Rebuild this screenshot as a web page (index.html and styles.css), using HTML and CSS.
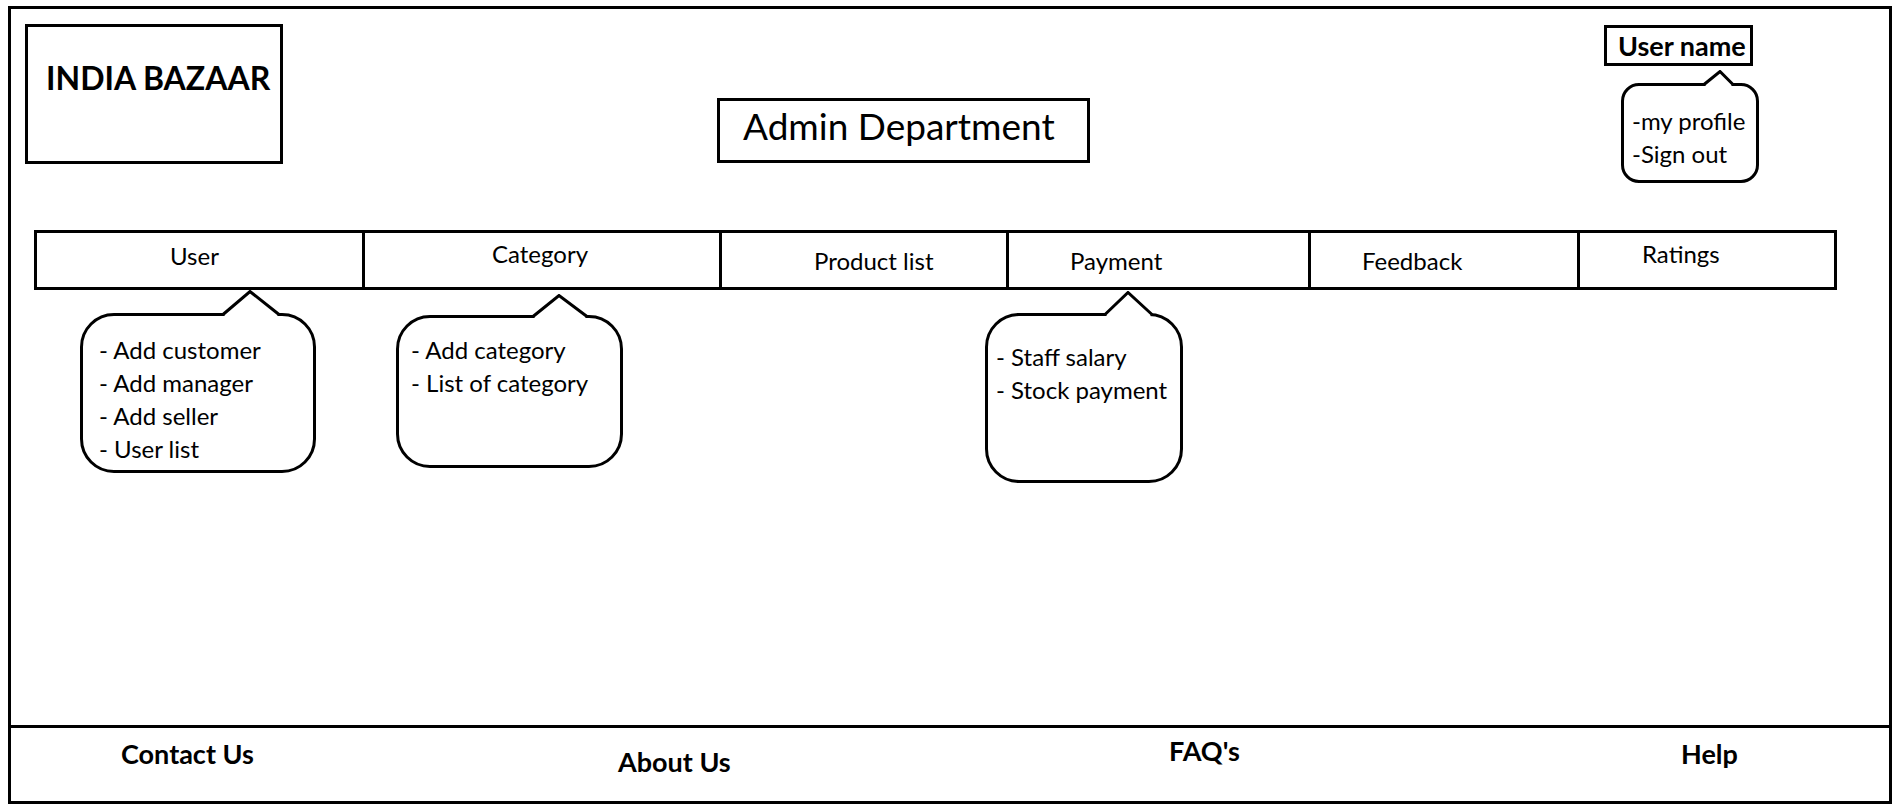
FILE: index.html
```html
<!DOCTYPE html>
<html>
<head>
    <link rel="stylesheet" href="styles.css">
</head>
<body>

<div class="frame">
    <div class="main">
        <div class="header">
            <div class="logo">INDIA BAZAAR</div>
            <div class="page-title">Admin Department</div>
            <div class="account">
                <div class="account-name">User name</div>
                <div class="bubble bubble--account">
                    <svg class="tail tail--account" width="33" height="17" viewBox="0 0 33 17">
                        <rect x="3.5" y="13" width="26" height="4" fill="#fff"/>
                        <polygon points="2,14.5 18,1.5 31,14.5" fill="#fff"/>
                        <polyline points="2,14.5 18,1.5 31,14.5" fill="none" stroke="#000" stroke-width="3"/>
                    </svg>
                    -my profile<br>
                    -Sign out
                </div>
            </div>
        </div>

        <div class="nav">
            <div class="nav-item nav-item--user">
                User
                <div class="bubble bubble--user">
                    <svg class="tail tail--user" width="60" height="27" viewBox="0 0 60 27">
                        <rect x="3.5" y="23" width="53" height="4" fill="#fff"/>
                        <polygon points="2,24.5 29,1.5 58,24.5" fill="#fff"/>
                        <polyline points="2,24.5 29,1.5 58,24.5" fill="none" stroke="#000" stroke-width="3"/>
                    </svg>
                    - Add customer<br>
                    - Add manager<br>
                    - Add seller<br>
                    - User list
                </div>
            </div>
            <div class="nav-item nav-item--category">
                Category
                <div class="bubble bubble--category">
                    <svg class="tail tail--category" width="58" height="25" viewBox="0 0 58 25">
                        <rect x="3.5" y="21" width="51" height="4" fill="#fff"/>
                        <polygon points="2,22.5 28,1.5 56,22.5" fill="#fff"/>
                        <polyline points="2,22.5 28,1.5 56,22.5" fill="none" stroke="#000" stroke-width="3"/>
                    </svg>
                    - Add category<br>
                    - List of category
                </div>
            </div>
            <div class="nav-item nav-item--products">Product list</div>
            <div class="nav-item nav-item--payment">
                Payment
                <div class="bubble bubble--payment">
                    <svg class="tail tail--payment" width="51" height="26" viewBox="0 0 51 26">
                        <rect x="3.5" y="22" width="44" height="4" fill="#fff"/>
                        <polygon points="2,23.5 25,1.5 49,23.5" fill="#fff"/>
                        <polyline points="2,23.5 25,1.5 49,23.5" fill="none" stroke="#000" stroke-width="3"/>
                    </svg>
                    - Staff salary<br>
                    - Stock payment
                </div>
            </div>
            <div class="nav-item nav-item--feedback">Feedback</div>
            <div class="nav-item nav-item--ratings">Ratings</div>
        </div>
    </div>

    <div class="footer">
        <div class="footer-link">Contact Us</div>
        <div class="footer-link footer-link--about">About Us</div>
        <div class="footer-link footer-link--faq">FAQ's</div>
        <div class="footer-link">Help</div>
    </div>
</div>

</body>
</html>
```

FILE: styles.css
```css
body, html {
    margin: 0;
    background-color: #fff;
    color: #000;
    font-family: Lato, "Open Sans", sans-serif;
}

.frame {
    box-sizing: border-box;
    width: 1884px;
    height: 798px;
    margin: 6px 0 0 8px;
    border: 3px solid #000;
    display: flex;
    flex-direction: column;
}

.main {
    flex: 1;
}

/* top row: logo, title, account menu */
.header {
    display: flex;
    align-items: flex-start;
    padding: 15px 0 0 14px;
}

.logo {
    box-sizing: border-box;
    width: 258px;
    height: 140px;
    border: 3px solid #000;
    padding: 32px 0 0 18px;
    font-size: 32px;
    font-weight: bold;
    line-height: 1.2;
    white-space: nowrap;
}

.page-title {
    box-sizing: border-box;
    width: 373px;
    height: 65px;
    margin: 74px 0 0 434px;
    border: 3px solid #000;
    padding: 3px 0 0 23px;
    font-size: 37px;
    line-height: 1.2;
    white-space: nowrap;
}

.account {
    position: relative;
    margin: 1px 0 0 514px;
}

.account-name {
    box-sizing: border-box;
    width: 149px;
    height: 41px;
    border: 3px solid #000;
    padding: 2px 0 0 11px;
    font-size: 27px;
    font-weight: bold;
    line-height: 1.2;
    white-space: nowrap;
}

/* dropdown bubbles */
.bubble {
    position: absolute;
    box-sizing: border-box;
    border: 3px solid #000;
    border-radius: 34px;
    background-color: #fff;
    font-size: 24px;
    line-height: 33px;
    white-space: nowrap;
    z-index: 2;
}

.tail {
    position: absolute;
    display: block;
}

.bubble--account {
    left: 17px;
    top: 58px;
    width: 138px;
    height: 100px;
    border-radius: 18px;
    padding: 18px 0 0 8px;
}
.tail--account { left: 78px; top: -16px; }

.bubble--user {
    left: 43px;
    top: 80px;
    width: 236px;
    height: 160px;
    padding: 17px 0 0 16px;
}
.tail--user { left: 138px; top: -26px; }

.bubble--category {
    left: 31px;
    top: 82px;
    width: 227px;
    height: 153px;
    padding: 15px 0 0 12px;
}
.tail--category { left: 132px; top: -24px; }

.bubble--payment {
    left: -24px;
    top: 80px;
    width: 198px;
    height: 170px;
    padding: 24px 0 0 8px;
}
.tail--payment { left: 115px; top: -25px; }

/* menu bar */
.nav {
    display: grid;
    grid-template-columns: 325px 357px 287px 302px 269px 257px;
    height: 60px;
    box-sizing: border-box;
    width: 1803px;
    margin: 66px 0 0 23px;
    border: 3px solid #000;
}

.nav-item {
    position: relative;
    box-sizing: border-box;
    font-size: 24px;
    line-height: 1.2;
    padding-top: 9px;
}

.nav-item + .nav-item {
    border-left: 3px solid #000;
}

.nav-item--user { padding-left: 133px; }
.nav-item--category { padding: 7px 0 0 127px; }
.nav-item--products { padding: 14px 0 0 92px; }
.nav-item--payment { padding: 14px 0 0 61px; }
.nav-item--feedback { padding: 14px 0 0 51px; }
.nav-item--ratings { padding: 7px 0 0 62px; }

/* footer links */
.footer {
    display: grid;
    grid-template-columns: 497px 551px 512px auto;
    height: 76px;
    box-sizing: border-box;
    border-top: 3px solid #000;
    padding: 7px 0 0 110px;
}

.footer-link {
    margin-top: 3px;
    font-size: 27px;
    font-weight: bold;
    line-height: 1.2;
}

.footer-link--about { margin-top: 11px; }
.footer-link--faq { margin-top: 0; }
```
